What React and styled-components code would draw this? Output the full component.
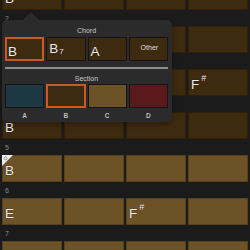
import React from "react";
import styled, { createGlobalStyle } from "styled-components";

const GlobalStyle = createGlobalStyle`
  html, body {
    margin: 0;
    padding: 0;
    background: #1b1b1b;
    overflow: hidden;
  }
  body {
    font-family: "Liberation Sans", Arial, sans-serif;
  }
`;

const tones = {
  dark: "#3e2a0f",
  light: "#6d5228",
  teal: "#1d3743",
  red: "#5a191d",
};

const Page = styled.div`
  position: relative;
  width: 250px;
  height: 250px;
  overflow: hidden;
  background: #1b1b1b;
`;

const Sheet = styled.div`
  display: flex;
  flex-direction: column;
  margin-top: -33px;
  padding: 0 2px;
`;

const BarNumber = styled.div`
  height: 16px;
  display: flex;
  align-items: center;
  padding-left: 3px;
  font-size: 7px;
  color: #8a8a8a;
`;

const CellRow = styled.div`
  display: grid;
  grid-template-columns: repeat(4, 60px);
  gap: 2px;
  height: 27px;
`;

const Cell = styled.div`
  position: relative;
  display: flex;
  align-items: flex-end;
  padding: 0 0 5px 3px;
  box-sizing: border-box;
  background: ${({ $tone }) => tones[$tone]};
  box-shadow: inset 0 0 0 1px rgba(0, 0, 0, 0.22);
`;

const ChordName = styled.span`
  font-size: 13.5px;
  line-height: 13px;
  color: #ececec;
  text-shadow: 0 0 1px rgba(0, 0, 0, 0.6);
`;

const Sharp = styled.span`
  font-size: 9px;
  margin-left: 2px;
  vertical-align: 8px;
`;

const Sub = styled.span`
  font-size: 8px;
  margin-left: 1px;
  vertical-align: -1px;
`;

const Marker = styled.svg`
  position: absolute;
  left: 0;
  top: 0;
`;

const Popover = styled.div`
  position: absolute;
  left: 2px;
  top: 20px;
  width: 170px;
  height: 102px;
  box-sizing: border-box;
  padding: 0 4px 0 3px;
  background: #2b2b2b;
  border-radius: 5px;
  display: flex;
  flex-direction: column;
  box-shadow: 0 2px 6px rgba(0, 0, 0, 0.35);

  &::before {
    content: "";
    position: absolute;
    left: 21px;
    top: -8px;
    border-left: 8px solid transparent;
    border-right: 8px solid transparent;
    border-bottom: 8px solid #2b2b2b;
  }
`;

const GroupTitle = styled.div`
  height: ${({ $h }) => $h}px;
  box-sizing: border-box;
  padding-top: 3px;
  display: flex;
  align-items: center;
  justify-content: center;
  font-size: 7px;
  color: #c9c9c9;
`;

const OptionRow = styled.div`
  display: grid;
  grid-template-columns: repeat(4, 1fr);
  gap: 2px;
  height: 24px;
`;

const ChordOption = styled.div`
  display: flex;
  align-items: flex-end;
  justify-content: ${({ $center }) => ($center ? "center" : "flex-start")};
  padding: 0 0 2px 2px;
  box-sizing: border-box;
  background: ${tones.dark};
  border: 1px solid ${({ $active }) => ($active ? "#c95a24" : "#171310")};
  box-shadow: ${({ $active }) => ($active ? "inset 0 0 0 1px #c95a24" : "none")};
  color: #ececec;
`;

const OtherLabel = styled.span`
  font-size: 7px;
  line-height: 20px;
  color: #dedede;
`;

const Divider = styled.div`
  margin-top: 6px;
  height: 2px;
  background: #8e8e8e;
`;

const Swatch = styled.div`
  box-sizing: border-box;
  background: ${({ $tone }) => tones[$tone]};
  border: 1px solid ${({ $active }) => ($active ? "#c95a24" : "#151515")};
  box-shadow: ${({ $active }) => ($active ? "inset 0 0 0 1px #c95a24" : "none")};
`;

const SwatchLabels = styled.div`
  display: grid;
  grid-template-columns: repeat(4, 1fr);
  gap: 2px;
  height: 14px;
  align-items: center;
  text-align: center;
  font-size: 6.5px;
  font-weight: bold;
  color: #bdbdbd;
`;

const Chord = ({ root, sharp }) => (
  <ChordName>
    {root}
    {sharp && <Sharp>#</Sharp>}
  </ChordName>
);

const bars = [
  { n: 1, tone: "dark", cells: [{ root: "B" }, null, null, null] },
  { n: 2, tone: "dark", cells: [null, null, null, null] },
  { n: 3, tone: "dark", cells: [null, null, null, { root: "F", sharp: true }] },
  { n: 4, tone: "dark", cells: [{ root: "B" }, null, null, null] },
  { n: 5, tone: "light", marker: true, cells: [{ root: "B" }, null, null, null] },
  { n: 6, tone: "light", cells: [{ root: "E" }, null, { root: "F", sharp: true }, null] },
  { n: 7, tone: "light", cells: [null, null, null, null] },
];

const sections = [
  { id: "A", tone: "teal" },
  { id: "B", tone: "dark", active: true },
  { id: "C", tone: "light" },
  { id: "D", tone: "red" },
];

export default function App() {
  return (
    <Page>
      <GlobalStyle />
      <Sheet>
        {bars.map((bar) => (
          <div key={bar.n}>
            <BarNumber>{bar.n}</BarNumber>
            <CellRow>
              {bar.cells.map((c, i) => (
                <Cell key={i} $tone={bar.tone}>
                  {bar.marker && i === 0 && (
                    <Marker width="11" height="11" viewBox="0 0 11 11">
                      <polygon points="0,0 11,0 0,11" fill="#eeeeee" />
                      <circle cx="3.6" cy="3.4" r="1.5" fill="none" stroke="#8a8a8a" strokeWidth="0.9" />
                    </Marker>
                  )}
                  {c && <Chord {...c} />}
                </Cell>
              ))}
            </CellRow>
          </div>
        ))}
      </Sheet>

      <Popover>
        <GroupTitle $h={17}>Chord</GroupTitle>
        <OptionRow>
          <ChordOption $active>
            <ChordName>B</ChordName>
          </ChordOption>
          <ChordOption>
            <ChordName>
              B<Sub>7</Sub>
            </ChordName>
          </ChordOption>
          <ChordOption>
            <ChordName>A</ChordName>
          </ChordOption>
          <ChordOption $center>
            <OtherLabel>Other</OtherLabel>
          </ChordOption>
        </OptionRow>
        <Divider />
        <GroupTitle $h={15}>Section</GroupTitle>
        <OptionRow>
          {sections.map((s) => (
            <Swatch key={s.id} $tone={s.tone} $active={s.active} />
          ))}
        </OptionRow>
        <SwatchLabels>
          {sections.map((s) => (
            <span key={s.id}>{s.id}</span>
          ))}
        </SwatchLabels>
      </Popover>
    </Page>
  );
}
